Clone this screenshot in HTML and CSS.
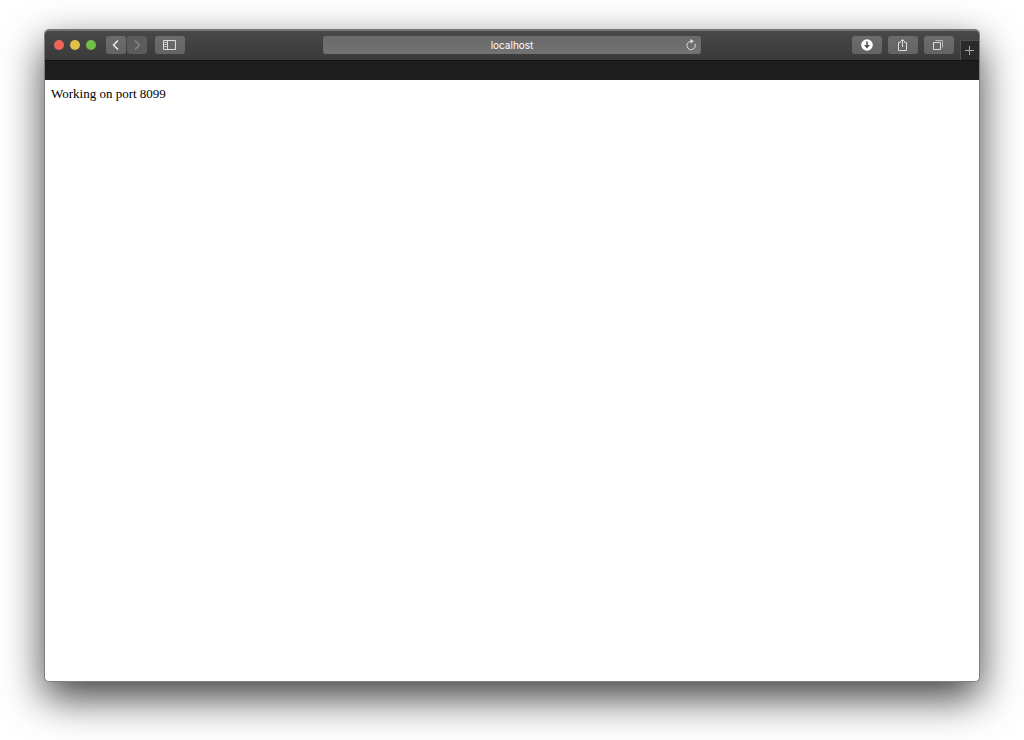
FILE: index.html
```html
<!DOCTYPE html>
<html lang="en">

<head>
    <meta charset="UTF-8">
    <meta name="viewport" content="width=device-width, initial-scale=1.0">
    <title>localhost</title>
    <link rel="stylesheet" href="styles.css">
</head>

<body>

    <div class="window">
        <header class="toolbar">
            <div class="left">
                <div class="lights">
                    <button class="light close" aria-label="Close"></button>
                    <button class="light minimize" aria-label="Minimize"></button>
                    <button class="light zoom" aria-label="Zoom"></button>
                </div>
                <div class="history">
                    <button class="tool small" aria-label="Back">
                        <svg width="20" height="18" viewBox="0 0 20 18"><path d="M12 4.5 7.5 9l4.5 4.5" stroke="#f2f2f2" stroke-width="1.4"/></svg>
                    </button>
                    <button class="tool small" aria-label="Forward" disabled>
                        <svg width="20" height="18" viewBox="0 0 20 18"><path d="M8 4.5 12.5 9 8 13.5" stroke="#8c8c8c" stroke-width="1.2"/></svg>
                    </button>
                </div>
                <button class="tool" aria-label="Sidebar">
                    <svg width="29" height="18" viewBox="0 0 29 18"><path d="M8.5 4.5h12v9h-12zM12.5 4.5v9M9.5 6.5h2M9.5 8.5h2M9.5 10.5h2"/></svg>
                </button>
            </div>

            <form class="address">
                <input type="text" value="localhost" aria-label="Address" spellcheck="false">
                <button type="button" class="reload" aria-label="Reload">
                    <svg width="12" height="12" viewBox="0 0 12 12"><path d="M9.9 4.6A4.2 4.2 0 1 1 6 2.3"/><path d="M5.5 0 8.9 2.3 5.5 4.6z" fill="#e0e0e0" stroke="none"/></svg>
                </button>
            </form>

            <div class="right">
                <button class="tool" aria-label="Downloads">
                    <svg width="30" height="18" viewBox="0 0 30 18"><circle cx="15" cy="9" r="5.8" fill="#fff" stroke="none"/><path d="M15 5.5v5" stroke="#555" stroke-width="1.6"/><path d="M12 9h6l-3 3.5z" fill="#555" stroke="none"/></svg>
                </button>
                <button class="tool" aria-label="Share">
                    <svg width="30" height="18" viewBox="0 0 30 18"><path d="M12.5 6.5h-2v8h8v-8h-2M14.5 11V3.5M12 6l2.5-2.5L17 6"/></svg>
                </button>
                <button class="tool" aria-label="Show all tabs">
                    <svg width="30" height="18" viewBox="0 0 30 18"><path d="M9.5 6.5h7v7h-7z"/><path d="M11.5 4.5h7v7" stroke="#b8b8b8"/></svg>
                </button>
                <button class="new-tab" aria-label="New tab">
                    <svg width="18" height="19" viewBox="0 0 18 19"><path d="M8.5 5v9M4 9.5h9" stroke="#aaa"/></svg>
                </button>
            </div>
        </header>

        <div class="tabbar"></div>

        <main class="page">Working on port 8099</main>
    </div>

</body>

</html>
```

FILE: styles.css
```css
* {
    box-sizing: border-box;
}

body {
    display: flex;
    min-height: 100vh;
    margin: 0;
    padding: 29px 44px 58px;
    background: #fff;
}

.window {
    display: flex;
    flex: 1;
    flex-direction: column;
    min-width: 0;
    overflow: hidden;
    border: 1px solid #808080;
    border-width: 0 1px 1px;
    border-radius: 5px;
    background: #fff;
    box-shadow: 0 16px 40px rgba(0, 0, 0, 0.75);
}

.toolbar {
    display: grid;
    grid-template-columns: 1fr minmax(0, 378px) 1fr;
    height: 32px;
    margin: 0 -1px;
    border-top: 2px solid #747676;
    border-bottom: 1px solid #121212;
    border-radius: 5px 5px 0 0;
    background: linear-gradient(#484848, #3a3a3a);
}

button {
    padding: 0;
    border: 0;
    background: none;
}

svg {
    display: block;
    fill: none;
    stroke: #dcdcdc;
    stroke-width: 1;
}

.left,
.address,
.right {
    padding-top: 5px;
}

.left,
.right,
.lights,
.history {
    display: flex;
    align-items: flex-start;
}

.left {
    gap: 8px;
    padding-left: 10px;
}

.lights {
    align-items: center;
    gap: 6px;
    height: 18px;
    margin-right: 2px;
}

.light {
    width: 10px;
    height: 10px;
    border-radius: 50%;
}

.close {
    background: #ed655a;
}

.minimize {
    background: #e0c04c;
}

.zoom {
    background: #72be47;
}

.history {
    gap: 1px;
}

.tool {
    width: 30px;
    height: 18px;
    border-radius: 3px;
    background: linear-gradient(#6c6c6c, #646464);
}

.small {
    width: 20px;
}

.small:disabled {
    background: #5c5c5c;
}

.address {
    position: relative;
}

.address input {
    display: block;
    width: 100%;
    height: 18px;
    padding: 0 20px;
    border: 0;
    border-radius: 3px;
    background: linear-gradient(#6a6a6a, #727272);
    color: #fff;
    font: 10px Inter, sans-serif;
    text-align: center;
}

.reload {
    position: absolute;
    top: 8px;
    right: 4px;
}

.right {
    justify-content: flex-end;
    gap: 6px;
}

.new-tab {
    align-self: flex-end;
    width: 20px;
    height: 20px;
    border: 1px solid #505050;
    border-width: 1px 0 0 1px;
    background: #2a2a2a;
}

.tabbar {
    height: 19px;
    margin: 0 -1px;
    background: #1e1e1e;
}

.page {
    flex: 1;
    padding: 6px;
    font: 13px/15px "Liberation Serif", serif;
    color: #000;
}
```
